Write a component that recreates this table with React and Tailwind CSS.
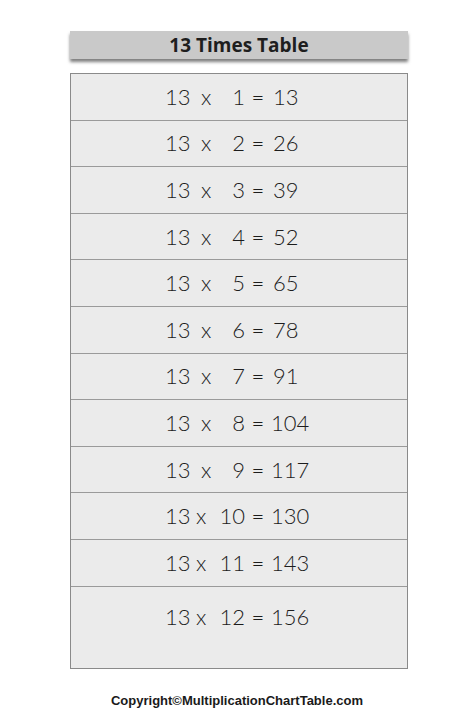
const rows = [1, 2, 3, 4, 5, 6, 7, 8, 9, 10, 11, 12]

const Row = ({ n, last }) => (
	<div
		className={
			last
				? "h-[81px] pt-[19px] flex items-start"
				: "h-[46.6px] flex items-center border-b border-[#9a9a9a]"
		}
	>
		<div className="flex items-center text-[22px] leading-none text-[#1c1c1c] font-light" style={{ fontFamily: "Lato, 'Open Sans', sans-serif" }}>
			<span className="w-[94px]" />
			<span className={n >= 10 ? "w-[31px]" : "w-[36px]"}>13</span>
			<span className={n >= 10 ? "w-[17px]" : "w-[17px]"}>x</span>
			<span className={n >= 10 ? "w-[32px] text-right" : "w-[27px] text-right"}>{n}</span>
			<span className="w-[26px] text-center">=</span>
			<span className={n >= 8 ? "pl-[0px]" : "pl-[2px]"}>{13 * n}</span>
		</div>
	</div>
)

const App = () => {
	return (
		<div className="w-[474px] h-[726px] bg-white relative">
			{/* Title bar */}
			<div className="pt-[31px] pl-[70px]">
				<div className="w-[338px] h-[28px] bg-[#c9c9c9] shadow-[0_3px_3px_rgba(0,0,0,0.5)] flex items-center justify-center">
					<span className="text-[19px] font-bold text-[#1e1e1e]" style={{ fontFamily: "'Open Sans', 'Liberation Sans', sans-serif" }}>
						13 Times Table
					</span>
				</div>
			</div>

			{/* Table */}
			<div className="ml-[70px] mt-[14px] w-[338px] border border-[#8a8a8a] bg-[#ebebeb]">
				{rows.map((n, i) => (
					<Row key={n} n={n} last={i === rows.length - 1} />
				))}
			</div>

			{/* Footer */}
			<div className="mt-[22px] text-center text-[13px] font-bold text-[#1a1a1a]" style={{ fontFamily: "'Liberation Sans', Arial, sans-serif" }}>
				Copyright©MultiplicationChartTable.com
			</div>
		</div>
	)
}

export default App
